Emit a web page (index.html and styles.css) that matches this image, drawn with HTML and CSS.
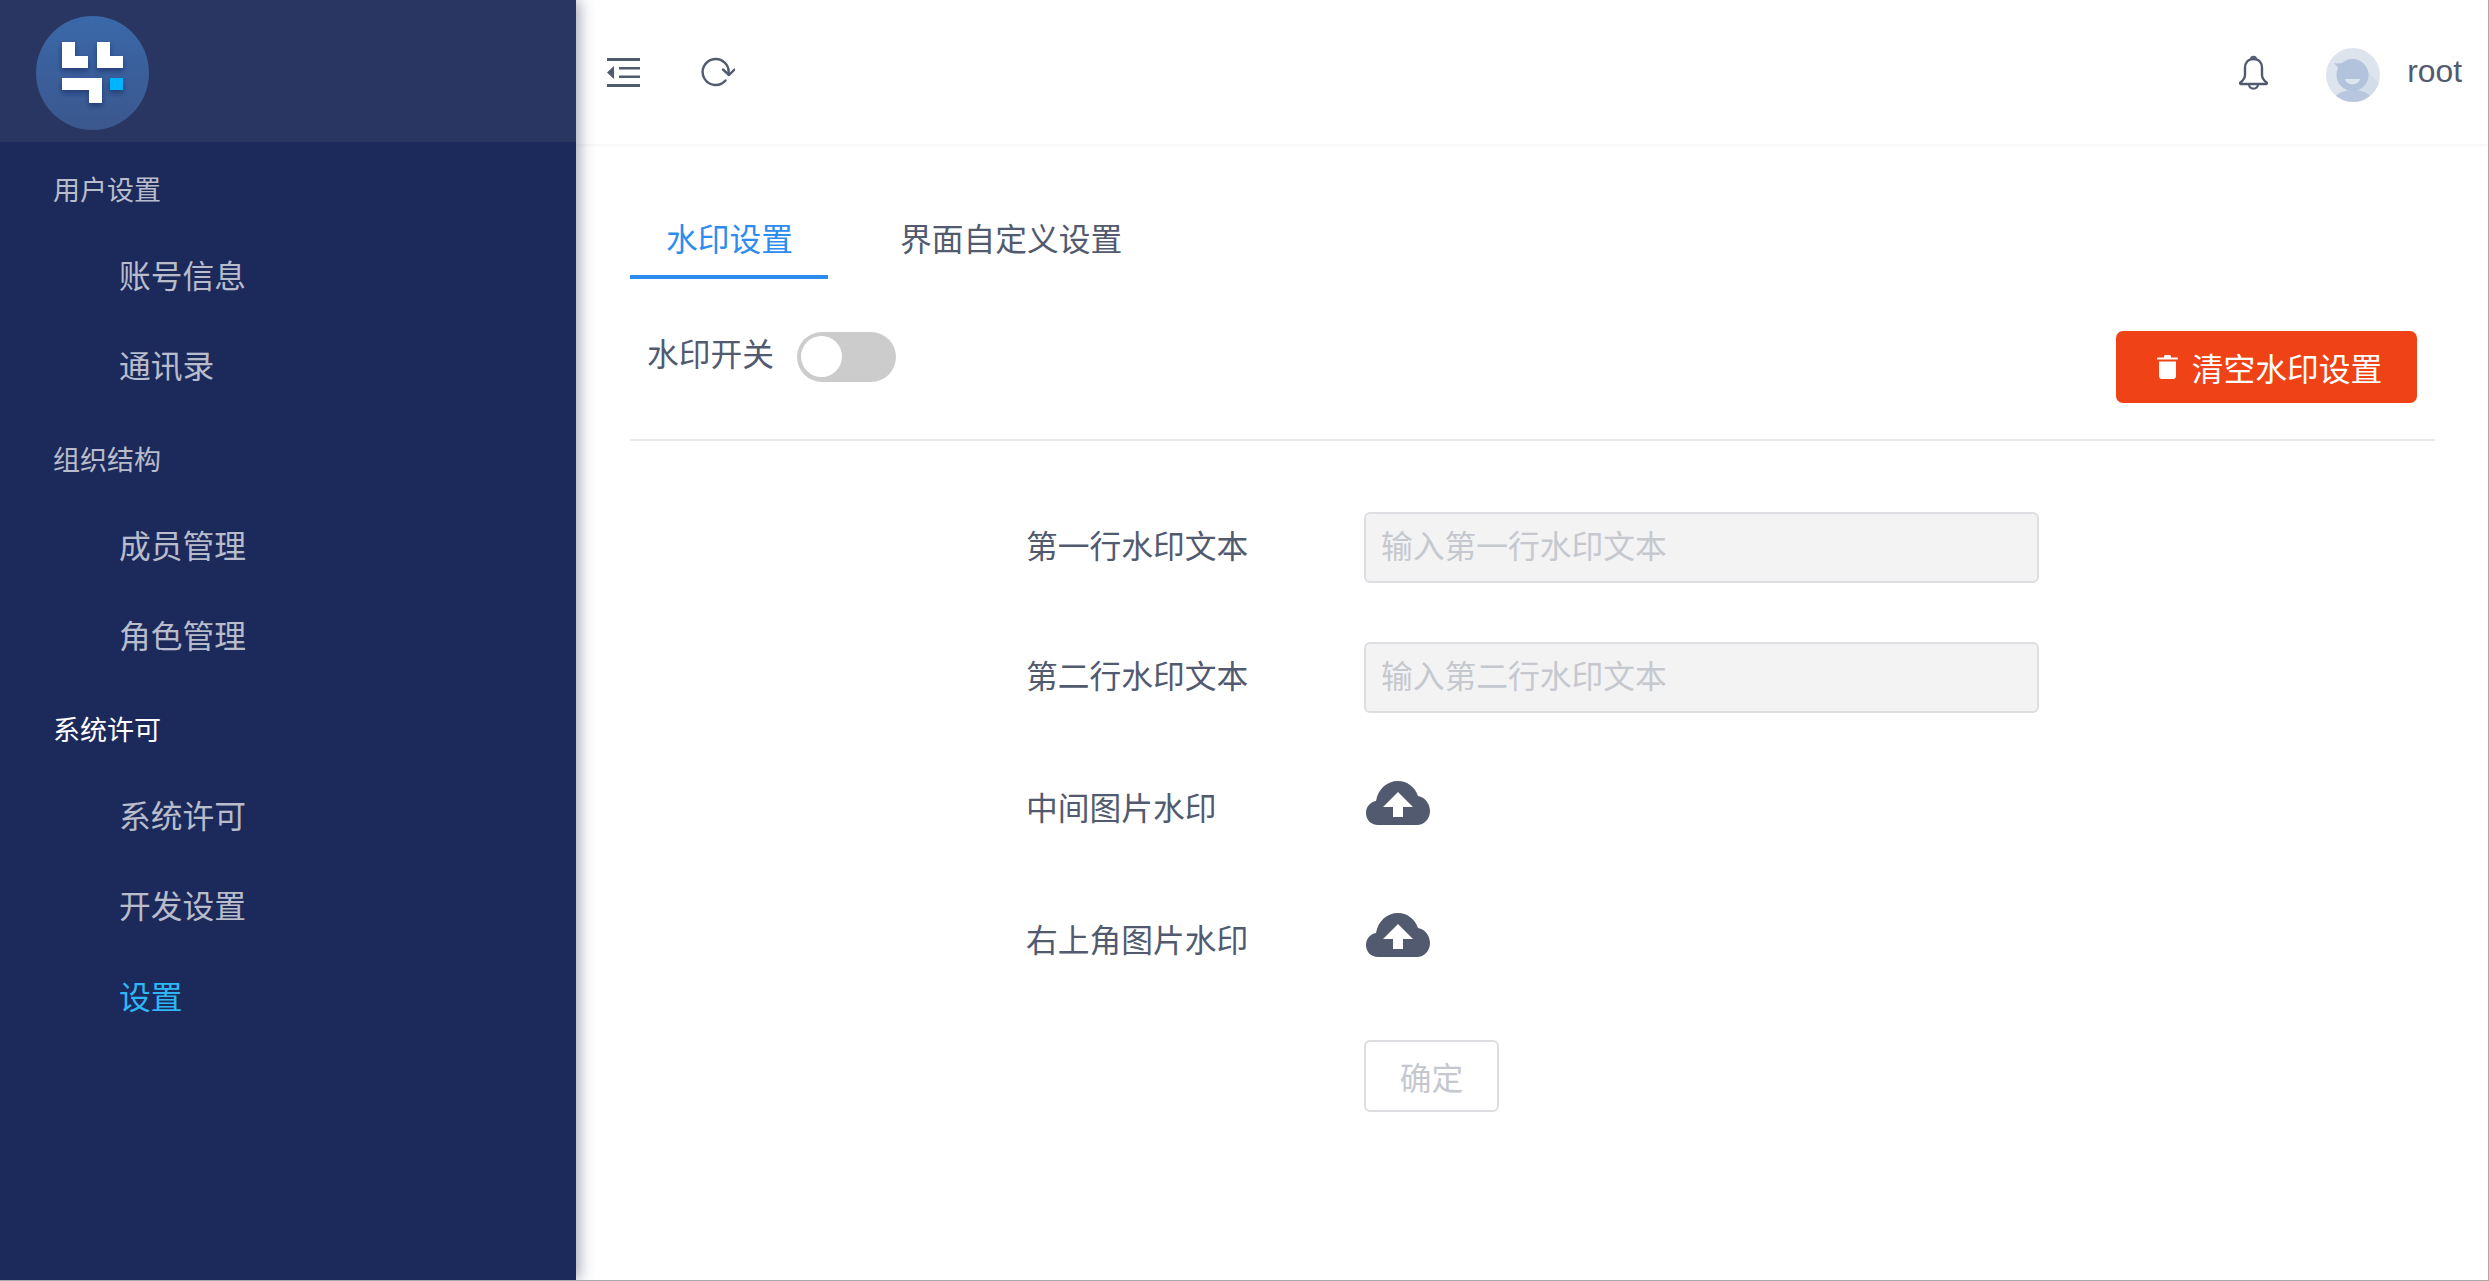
FILE: index.html

```html
<!DOCTYPE html>
<html lang="zh-CN">
<head>
  <meta charset="UTF-8">
  <title>设置</title>
  <link rel="stylesheet" href="styles.css">
</head>
<body>
  <div class="page">
    <aside class="sidebar">
      <div class="logoBar">
        <svg class="logo" viewBox="0 0 113 114" width="113" height="114">
          <defs>
            <linearGradient id="logoBg" x1="0" y1="0" x2="0" y2="1">
              <stop offset="0" stop-color="#3a68a8"/>
              <stop offset="1" stop-color="#3b578e"/>
            </linearGradient>
            <filter id="logoShadow" x="-30%" y="-30%" width="160%" height="170%">
              <feDropShadow dx="0" dy="3" stdDeviation="2.5" flood-color="#16285c" flood-opacity="0.6"/>
            </filter>
          </defs>
          <ellipse cx="56.5" cy="57" rx="56.5" ry="57" fill="url(#logoBg)"/>
          <g filter="url(#logoShadow)">
            <path fill="#fff" d="M26 26h13v14h13v12H26zM61 26h13v14h13v12H61zM26 62h40v25H53V74H26z"/>
            <path fill="#00b4ff" d="M74 62h13v12H74z"/>
          </g>
        </svg>
      </div>
      <nav class="menu">
        <div class="menuGroup">用户设置</div>
        <a class="menuItem">账号信息</a>
        <a class="menuItem">通讯录</a>
        <div class="menuGroup">组织结构</div>
        <a class="menuItem">成员管理</a>
        <a class="menuItem">角色管理</a>
        <div class="menuGroup current">系统许可</div>
        <a class="menuItem">系统许可</a>
        <a class="menuItem">开发设置</a>
        <a class="menuItem active">设置</a>
      </nav>
    </aside>

    <div class="main">
      <header class="topbar">
        <div class="topLeft">
          <svg class="icon" viewBox="0 0 33 29" width="33" height="29">
            <path fill="#515a6e" d="M0 0h33v3H0zM12 9h21v2.500H12zM12 17.500h21v2.500H12zM0 26h33v3H0zM7 8v13L0 14.500z"/>
          </svg>
          <svg class="icon refresh" viewBox="0 0 34 30" width="34" height="30">
            <path fill="none" stroke="#515a6e" stroke-width="2.400" stroke-linecap="round" d="M24.500 23.500A13 13 0 1 1 27.500 17"/>
            <path fill="none" stroke="#515a6e" stroke-width="2.400" stroke-linecap="round" stroke-linejoin="round" d="M22 12.500l6 5.500 5.500-5.500"/>
          </svg>
        </div>
        <div class="topRight">
          <svg class="icon bell" viewBox="0 0 29 35" width="29" height="35">
            <path fill="none" stroke="#515a6e" stroke-width="2.400" stroke-linejoin="round" d="M14.500 4c-5.500 0-8.500 4-8.500 9v7c0 3-2 5.500-4.500 7.500-.8.700-.3 1.500.5 1.500h25c.8 0 1.300-.8.500-1.500C25 25.500 23 23 23 20v-7c0-5-3-9-8.500-9z"/>
            <path fill="none" stroke="#515a6e" stroke-width="2.200" d="M12 4.300c0-3.400 5-3.400 5 0M10 29.500c.6 5.500 8.400 5.500 9 0"/>
          </svg>
          <svg class="avatar" viewBox="0 0 54 54" width="54" height="54">
            <defs>
              <clipPath id="avatarClip"><circle cx="27" cy="27" r="27"/></clipPath>
            </defs>
            <g clip-path="url(#avatarClip)">
              <rect width="54" height="54" fill="#dde4ee"/>
              <path fill="#d3dce9" d="M30 12L54 36v18H30z"/>
              <ellipse cx="27" cy="56" rx="21" ry="14" fill="#b9c7de"/>
              <circle cx="26.500" cy="27" r="16" fill="#b4c3dc"/>
              <path fill="#b4c3dc" d="M8 15c4 1 8 0 12-1l2 5-8 3z"/>
              <path fill="#dde5ef" d="M19 31h15c-1 7-14 7-15 0z"/>
            </g>
          </svg>
          <span class="userName">root</span>
        </div>
      </header>

      <section class="content">
        <div class="tabs">
          <div class="tab active">水印设置</div>
          <div class="tab">界面自定义设置</div>
        </div>

        <div class="toolRow">
          <div class="switchWrap">
            <span class="switchLabel">水印开关</span>
            <span class="switch"><span class="knob"></span></span>
          </div>
          <button class="clearBtn" type="button">
            <svg viewBox="0 0 21 24" width="21" height="24">
              <path fill="#fff" d="M7 2.500V1.500C7 .7 7.700 0 8.500 0h4c.8 0 1.500.7 1.500 1.500v1h6c.6 0 1 .4 1 1s-.4 1-1 1H1c-.6 0-1-.4-1-1s.4-1 1-1zM2 6.500h17V21c0 1.700-1.300 3-3 3H5c-1.700 0-3-1.300-3-3z"/>
            </svg>
            清空水印设置
          </button>
        </div>

        <form class="form">
          <div class="formRow">
            <label class="formLabel">第一行水印文本</label>
            <input class="textInput" type="text" placeholder="输入第一行水印文本" disabled>
          </div>
          <div class="formRow">
            <label class="formLabel">第二行水印文本</label>
            <input class="textInput" type="text" placeholder="输入第二行水印文本" disabled>
          </div>
          <div class="formRow upload">
            <label class="formLabel">中间图片水印</label>
            <svg class="cloud" viewBox="0 0 64 44" width="64" height="44">
              <path fill="#515a6e" d="M12 44C5 44 0 39 0 32c0-6 4-11 10-12C12 8 21 0 32 0c9 0 17 6 20 15 7 1 12 8 12 15 0 8-6 14-13 14z"/>
              <path fill="#fff" d="M32 11L17 26h10v10h10V26h10z"/>
            </svg>
          </div>
          <div class="formRow upload">
            <label class="formLabel">右上角图片水印</label>
            <svg class="cloud" viewBox="0 0 64 44" width="64" height="44">
              <path fill="#515a6e" d="M12 44C5 44 0 39 0 32c0-6 4-11 10-12C12 8 21 0 32 0c9 0 17 6 20 15 7 1 12 8 12 15 0 8-6 14-13 14z"/>
              <path fill="#fff" d="M32 11L17 26h10v10h10V26h10z"/>
            </svg>
          </div>
          <div class="formRow">
            <span class="formLabel"></span>
            <button class="okBtn" type="button" disabled>确定</button>
          </div>
        </form>
      </section>
    </div>
  </div>
</body>
</html>
```

FILE: styles.css

```css
* {
  box-sizing: border-box;
}

html,
body {
  margin: 0;
  padding: 0;
  background-color: #fff;
}

body {
  font-family: "Liberation Sans", "Noto Sans CJK SC", sans-serif;
  font-size: 31.75px;
  color: #515a6e;
}

.page {
  display: flex;
  width: 2489px;
  height: 1281px;
  border-right: 1px solid #a9a9a9;
  border-bottom: 1px solid #a9a9a9;
  overflow: hidden;
}

/* sidebar */
.sidebar {
  position: relative;
  z-index: 2;
  flex: 0 0 576px;
  background-color: #1c2a5b;
  box-shadow: 3px 0 14px rgba(40, 50, 80, 0.45);
}

.logoBar {
  display: flex;
  align-items: flex-start;
  height: 142px;
  padding: 16px 0 0 36px;
  background-color: #293662;
}

.logo {
  display: block;
}

.menu {
  display: flex;
  flex-direction: column;
  padding-top: 1.500px;
}

.menuGroup {
  height: 88px;
  padding: 0 0 0 53px;
  font-size: 27px;
  line-height: 94px;
  color: rgba(255, 255, 255, 0.7);
}

.menuItem + .menuGroup {
  margin-top: 1px;
}

.menuGroup.current {
  color: #fff;
}

.menuItem {
  display: block;
  height: 90.500px;
  padding-left: 119px;
  line-height: 90px;
  color: rgba(255, 255, 255, 0.7);
}

.menuItem.active {
  color: #2db7f5;
}

/* top bar */
.main {
  flex: 1;
  min-width: 0;
}

.topbar {
  position: relative;
  z-index: 1;
  display: flex;
  justify-content: space-between;
  align-items: center;
  height: 144px;
  padding: 0 26px 0 31px;
  box-shadow: 0 1px 4px rgba(0, 21, 41, 0.06);
}

.topLeft,
.topRight {
  display: flex;
  align-items: center;
}

.icon {
  display: block;
}

.refresh {
  margin-left: 61px;
}

.avatar {
  display: block;
  margin: 6px 0 0 60px;
}

.bell {
  position: relative;
  left: 2px;
}

.userName {
  margin-left: 27px;
  line-height: 40px;
  position: relative;
  top: -1px;
}

/* tabs */
.content {
  padding: 0 53px 0 54px;
}

.tabs {
  display: flex;
  margin-top: 67px;
}

.tab {
  height: 68px;
  padding: 0 36px;
  margin-right: 36px;
  line-height: 58px;
  white-space: nowrap;
}

.tab.active {
  width: 198px;
  color: #2d8cf0;
  border-bottom: 4px solid #2d8cf0;
}

/* switch row */
.toolRow {
  display: flex;
  justify-content: space-between;
  align-items: flex-start;
  height: 162px;
  padding: 53px 18px 0 17px;
  border-bottom: 2px solid #e8eaec;
}

.switchWrap {
  display: flex;
  align-items: center;
}

.switchLabel {
  line-height: 50px;
  position: relative;
  top: -2px;
}

.switch {
  display: block;
  width: 99px;
  height: 50px;
  margin-left: 23px;
  padding: 4px;
  border-radius: 25px;
  background-color: #ccc;
}

.knob {
  display: block;
  width: 41px;
  height: 41px;
  border-radius: 50%;
  background-color: #fff;
}

.clearBtn {
  display: flex;
  align-items: center;
  justify-content: center;
  width: 301px;
  height: 72px;
  margin-top: -1px;
  padding: 0 0 0 6px;
  border: none;
  border-radius: 7px;
  background-color: #ef4216;
  color: #fff;
  font-family: inherit;
  font-size: 31.75px;
}

.clearBtn svg {
  margin-right: 14px;
}

/* form */
.form {
  margin: 71px 0 0 397px;
}

.formRow {
  display: flex;
  align-items: center;
  height: 71px;
  margin-bottom: 59px;
}

.formRow.upload {
  height: 73px;
}

.formRow.upload + .formRow {
  margin-top: 0;
}

.formRow.upload + .formRow:not(.upload) {
  margin-top: 63px;
}

.formLabel {
  flex: 0 0 337px;
  line-height: 40px;
  position: relative;
  top: -1px;
  left: -1px;
}

.upload .formLabel {
  top: 0;
}

.textInput {
  width: 675px;
  height: 71px;
  padding: 0 15px;
  border: 2px solid #dcdee2;
  border-radius: 6px;
  background-color: #f3f3f3;
  font-family: inherit;
  font-size: 31.75px;
}

.textInput::placeholder {
  color: #c5c8ce;
  opacity: 1;
}

.cloud {
  display: block;
  margin: -11px 0 0 2px;
}

.okBtn {
  width: 135px;
  height: 72px;
  padding: 0;
  border: 2px solid #dcdee2;
  border-radius: 6px;
  background-color: #fff;
  color: #c5c8ce;
  font-family: inherit;
  font-size: 31.75px;
}
```
